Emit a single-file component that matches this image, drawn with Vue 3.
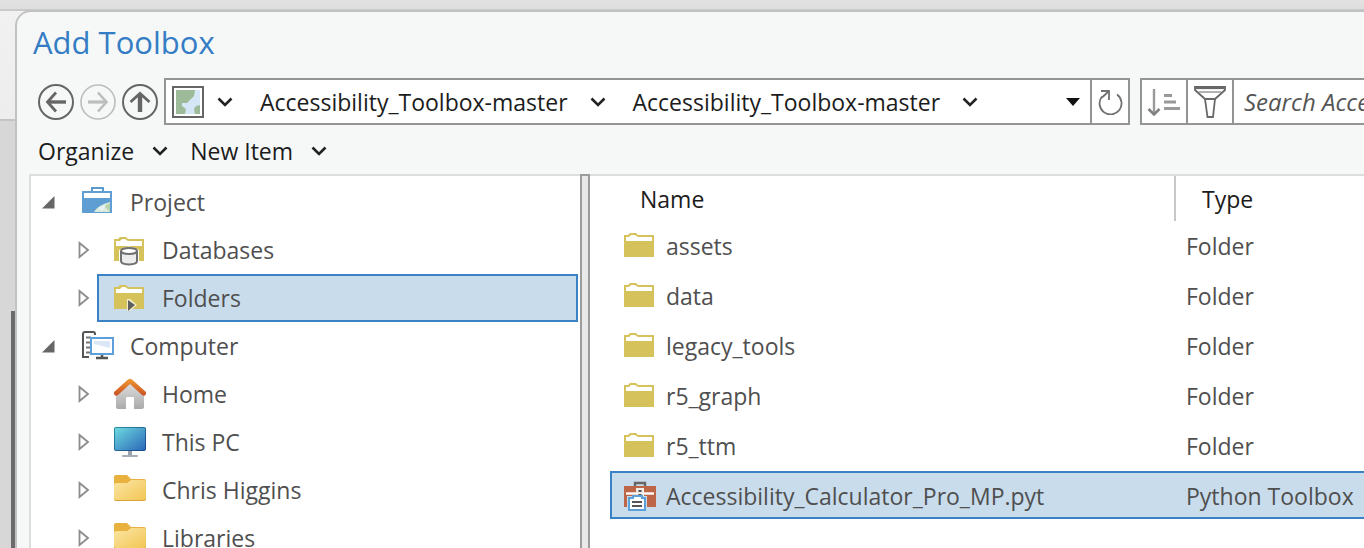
<script setup>
import { ref } from 'vue'

const treeItems = ref([
  { label: 'Project', icon: 'project', level: 1, open: true },
  { label: 'Databases', icon: 'databases', level: 2 },
  { label: 'Folders', icon: 'folders', level: 2, selected: true },
  { label: 'Computer', icon: 'computer', level: 1, open: true },
  { label: 'Home', icon: 'home', level: 2 },
  { label: 'This PC', icon: 'pc', level: 2 },
  { label: 'Chris Higgins', icon: 'winfolder', level: 2 },
  { label: 'Libraries', icon: 'winfolder', level: 2 },
])

const files = ref([
  { name: 'assets', type: 'Folder' },
  { name: 'data', type: 'Folder' },
  { name: 'legacy_tools', type: 'Folder' },
  { name: 'r5_graph', type: 'Folder' },
  { name: 'r5_ttm', type: 'Folder' },
  { name: 'Accessibility_Calculator_Pro_MP.pyt', type: 'Python Toolbox', selected: true },
])

const crumbs = ['Accessibility_Toolbox-master', 'Accessibility_Toolbox-master']
</script>

<template>
  <div class="desktop">
    <section class="dialog" aria-labelledby="dialog-title">
      <h1 id="dialog-title">Add Toolbox</h1>

      <div class="toolbar">
        <nav class="history" aria-label="History">
          <button type="button" aria-label="Back">
            <svg width="36" height="36" viewBox="0 0 36 36" fill="none" stroke="#666">
              <circle cx="18" cy="18" r="17" stroke-width="2" />
              <path d="M28 18H10" stroke-width="3.4" /><path d="M18 8.500L9.500 18L18 27.500" stroke-width="2.800" />
            </svg>
          </button>
          <button type="button" aria-label="Forward" disabled>
            <svg width="36" height="36" viewBox="0 0 36 36" fill="none" stroke="#bdbdbd">
              <circle cx="18" cy="18" r="17" stroke-width="1.600" />
              <path d="M8 18H26" stroke-width="3.2" /><path d="M18 8.500L26.500 18L18 27.500" stroke-width="2.600" />
            </svg>
          </button>
          <button type="button" aria-label="Up one level">
            <svg width="36" height="36" viewBox="0 0 36 36" fill="none" stroke="#666">
              <circle cx="18" cy="18" r="17" stroke-width="2" />
              <path d="M18 28V10" stroke-width="4.4" /><path d="M8.500 18L18 9.500L27.500 18" stroke-width="2.800" />
            </svg>
          </button>
        </nav>

        <div class="address">
          <svg class="place" width="32" height="32" viewBox="0 0 32 32">
            <rect x="1" y="1" width="30" height="30" fill="#fff" stroke="#666" stroke-width="2" />
            <rect x="4" y="4" width="24" height="24" fill="#9dbb98" />
            <path d="M23 4H28V19L24 20L22 23L23 28H13L14 23L10 20L10 17L15 17L19 13L22 10Z" fill="#d5e7f6" />
            <path d="M4 22L7 24L10 25L12 28H4Z" fill="#9dbb98" />
          </svg>
          <button type="button" class="chev" aria-label="Locations">
            <svg width="16" height="10" viewBox="0 0 16 10"><path d="M1.500 1.500L8 8L14.500 1.500" /></svg>
          </button>
          <template v-for="(crumb, i) in crumbs" :key="i">
            <button type="button" class="crumb">{{ crumb }}</button>
            <button type="button" class="chev" :aria-label="'Contents of ' + crumb">
              <svg width="16" height="10" viewBox="0 0 16 10"><path d="M1.500 1.500L8 8L14.500 1.500" /></svg>
            </button>
          </template>
          <button type="button" class="recent" aria-label="Recent places">
            <svg width="14" height="8" viewBox="0 0 14 8"><path d="M0 0H14L7 8Z" fill="#111" /></svg>
          </button>
          <button type="button" class="refresh" aria-label="Refresh">
            <svg width="26" height="26" viewBox="0 0 26 26" fill="none" stroke="#707070" stroke-width="1.800">
              <path d="M5 7.500A11 11 0 1 0 20 5.500" />
              <path d="M4 2H12V11" /><path d="M12 2L5 8.500" />
            </svg>
          </button>
        </div>

        <div class="search">
          <button type="button" class="tool" aria-label="Sort">
            <svg width="34" height="32" viewBox="0 0 34 32" fill="none" stroke="#999">
              <path d="M7 3V29" stroke-width="2.400" /><path d="M1.500 23L7 28.500L12.500 23" stroke-width="2.600" stroke="#808080" />
              <path d="M17 9.500H25M17 16H29M17 22.500H33" stroke-width="3" />
            </svg>
          </button>
          <button type="button" class="tool" aria-label="Filter">
            <svg width="34" height="34" viewBox="0 0 34 34" fill="#fff" stroke="#686868" stroke-width="1.800">
              <path d="M2 2H32V5L22 14H12L2 5Z" />
              <path d="M2 3H32" stroke-width="2.200" /><path d="M6 7H28" stroke="#aaa" />
              <path d="M12 14H22L20 32H14.500Z" />
            </svg>
          </button>
          <input type="text" aria-label="Search" placeholder="Search Accessibility_Toolbox-master" />
        </div>
      </div>

      <div class="menus">
        <button type="button">Organize
          <svg width="16" height="10" viewBox="0 0 16 10"><path d="M1.500 1.500L8 8L14.500 1.500" /></svg>
        </button>
        <button type="button">New Item
          <svg width="16" height="10" viewBox="0 0 16 10"><path d="M1.500 1.500L8 8L14.500 1.500" /></svg>
        </button>
      </div>

      <div class="panes">
        <ul class="tree">
          <li v-for="item in treeItems" :key="item.label" :class="{ child: item.level === 2 }">
            <button type="button" class="toggle" :aria-label="'Expand ' + item.label" :aria-expanded="!!item.open">
              <svg v-if="item.open" width="13" height="13" viewBox="0 0 13 13"><path d="M12.500 0V12.500H0Z" fill="#666" /></svg>
              <svg v-else class="closed" width="12" height="18" viewBox="0 0 12 18"><path d="M1.500 2V16L10 9Z" fill="#fff" stroke="#8c8c8c" stroke-width="1.800" /></svg>
            </button>
            <button type="button" class="entry" :class="{ selected: item.selected }">
              <svg width="32" height="32" viewBox="0 0 32 32">
                <g v-if="item.icon === 'project'">
                  <path d="M10 6V2H21V6" fill="none" stroke="#5b9bd0" stroke-width="2" />
                  <rect x="0" y="5" width="30" height="22" fill="#5f9ed2" />
                  <rect x="2" y="7" width="26" height="5" fill="#fff" />
                  <path d="M12 26Q16 19 28 16V26Z" fill="#dceadb" />
                  <path d="M22 20L28 26V17Z" fill="#b8d4ad" /><path d="M16 22L24 19L20 25Z" fill="#e9f3f8" />
                </g>
                <g v-else-if="item.icon === 'databases'">
                  <path d="M0 5H4L6 3H12L14 5H30V27H0Z" fill="#d5c25a" />
                  <path d="M2 7H6L8 5H11L14 7H28V12H2Z" fill="#fff" />
                  <path d="M5 30V16Q15 9 25 16V30Z" fill="#fff" />
                  <path d="M7 17V27C7 31.500 23 31.500 23 27V17" fill="#ececec" stroke="#707070" stroke-width="2" />
                  <ellipse cx="15" cy="17" rx="8" ry="3" fill="#fff" stroke="#707070" stroke-width="2" />
                </g>
                <g v-else-if="item.icon === 'folders'">
                  <path d="M0 5H4L6 3H12L14 5H30V27H0Z" fill="#d5c25a" />
                  <path d="M2 7H6L8 5H11L14 7H28V11H2Z" fill="#fff" />
                  <path d="M13 17H16L23 23L16 29H13Z" fill="#f4eecd" />
                  <path d="M14 18V29L21 23Z" fill="#606060" />
                </g>
                <g v-else-if="item.icon === 'computer'" fill="none">
                  <path d="M13 5V4Q13 2 11 2H3Q1 2 1 4V27H7" stroke="#555" stroke-width="2" />
                  <path d="M4 7.500H9M4 12.500H8M4 17.500H8M4 22.500H8" stroke="#777" stroke-width="1.800" />
                  <rect x="9" y="8" width="22" height="16" fill="#fff" stroke="#5d9fda" stroke-width="2" />
                  <path d="M12 11H28V18L12 14Z" fill="#dce7f5" />
                  <path d="M20 25V27M14 28H26" stroke="#555" stroke-width="2.600" />
                </g>
                <g v-else-if="item.icon === 'home'">
                  <defs>
                    <linearGradient id="wall" x2="0" y2="1"><stop stop-color="#e2e2e2" /><stop offset="1" stop-color="#aaa" /></linearGradient>
                    <linearGradient id="roof" x2="0" y2="1"><stop stop-color="#f09a35" /><stop offset="1" stop-color="#c84f23" /></linearGradient>
                  </defs>
                  <path d="M2 15L16 3L30 15V29Q30 31 28 31H20V20Q20 19 19 19H13Q12 19 12 20V31H4Q2 31 2 29Z" fill="url(#wall)" />
                  <path d="M0 14L14 1.500Q16 0 18 1.500L32 14V16Q31 19 28 17L16 6L4 17Q1 19 0 16Z" fill="url(#roof)" />
                </g>
                <g v-else-if="item.icon === 'pc'">
                  <defs>
                    <linearGradient id="screen" x2="1" y2="1"><stop stop-color="#6ed9df" /><stop offset="1" stop-color="#2a68b8" /></linearGradient>
                    <linearGradient id="bezel" x2="1" y2="1"><stop stop-color="#288da1" /><stop offset="1" stop-color="#1b448a" /></linearGradient>
                  </defs>
                  <rect x="14" y="25" width="4" height="5" fill="#9ba3ad" />
                  <rect x="8" y="29" width="16" height="2" rx="1" fill="#a5adb8" />
                  <rect x="0" y="1" width="32" height="24" rx="2" fill="url(#bezel)" />
                  <rect x="1" y="2" width="30" height="22" rx="1" fill="url(#screen)" />
                </g>
                <g v-else>
                  <defs>
                    <linearGradient id="manila" x2="1" y2="1"><stop stop-color="#fbe6a5" /><stop offset="1" stop-color="#f2c654" /></linearGradient>
                  </defs>
                  <path d="M0 3Q0 1 2 1H13L17 5H30Q32 5 32 7V12H0Z" fill="#e9b23f" />
                  <path d="M0 11Q0 9 2 9H13L17 6H30Q32 6 32 8V25Q32 27 30 27H2Q0 27 0 25Z" fill="#d9a435" />
                  <path d="M0 11Q0 9 2 9H13L17 6H30Q32 6 32 8V24Q32 26 30 26H2Q0 26 0 24Z" fill="url(#manila)" />
                </g>
              </svg>
              <span>{{ item.label }}</span>
            </button>
          </li>
        </ul>

        <div class="splitter" role="separator" aria-orientation="vertical"></div>

        <div class="listing">
          <table>
            <colgroup><col class="name-col" /><col /></colgroup>
            <thead>
              <tr><th scope="col">Name</th><th scope="col">Type</th></tr>
            </thead>
            <tbody>
              <tr v-for="file in files" :key="file.name" :class="{ selected: file.selected }">
                <td>
                  <div class="cell">
                    <svg width="32" height="32" viewBox="0 0 32 32">
                      <g v-if="file.type === 'Folder'">
                        <path d="M0 5H4L6 3H12L14 5H30V27H0Z" fill="#d5c25a" />
                        <path d="M2 7H5L7 5H11L14 7H28V11H2Z" fill="#fff" />
                      </g>
                      <g v-else>
                        <path d="M11 7V3H21V7" fill="none" stroke="#666" stroke-width="2.400" />
                        <rect x="0" y="6" width="32" height="21" fill="#bd6748" />
                        <path d="M2 13.500H30" stroke="#fff" stroke-width="2.400" />
                        <rect x="12" y="8" width="8" height="9" fill="#f2eeea" />
                        <path d="M16 10V12M16 14V17" stroke="#555" stroke-width="3.200" />
                        <rect x="3" y="16" width="20" height="15" fill="#c9dcec" />
                        <path d="M5 18H9V16H18V18H21V30H5Z" fill="#fff" stroke="#5ba0d9" stroke-width="2" />
                        <path d="M8 22H18M8 26H18" stroke="#555" stroke-width="2" />
                      </g>
                    </svg>
                    <span>{{ file.name }}</span>
                  </div>
                </td>
                <td><div class="cell">{{ file.type }}</div></td>
              </tr>
            </tbody>
          </table>
        </div>
      </div>
    </section>
  </div>
</template>

<style>
body {
  margin: 0;
}
</style>

<style scoped>
* {
  box-sizing: border-box;
}

.desktop {
  display: flex;
  height: 100vh;
  overflow: hidden;
  padding: 10px 0 0 15px;
  font-family: "Open Sans", "Noto Sans", sans-serif;
  font-size: 23px;
  line-height: 32px;
  color: #4f4f4f;
  background:
    linear-gradient(#6b6b6b, #6b6b6b) 11px 311px / 4px 100% no-repeat,
    linear-gradient(#e2e2e2, #dedede) 0 0 / 100% 9px no-repeat,
    linear-gradient(#c9c9c9, #c9c9c9) 0 9px / 100% 2px no-repeat,
    linear-gradient(#f1f1f1, #ededed) 0 11px / 100% 108px no-repeat,
    linear-gradient(#c4c4c4, #c4c4c4) 0 119px / 100% 2px no-repeat,
    #d7d7d7;
}

.dialog {
  flex: 1;
  min-width: 0;
  display: flex;
  flex-direction: column;
  border-top: 2px solid #c2c2c4;
  border-left: 2px solid #c2c2c4;
  border-top-left-radius: 16px;
  background: #f6f8f8;
}

button {
  display: flex;
  align-items: center;
  padding: 0;
  border: 0;
  background: none;
  font: inherit;
  color: inherit;
  text-align: left;
  white-space: nowrap;
}

svg {
  display: block;
  flex: none;
}

h1 {
  margin: 0;
  padding: 8px 0 14px 16px;
  font-size: 31px;
  line-height: 44px;
  font-weight: 400;
  color: #347dc4;
}

.toolbar {
  display: flex;
  height: 47px;
  color: #1c1c1c;
}

.history {
  display: flex;
  align-items: center;
  gap: 6px;
  padding: 0 6px 0 21px;
}

.address {
  flex: 1;
  min-width: 0;
  display: flex;
  align-items: center;
  border: 2px solid #949494;
  background: #fff;
  padding-left: 6px;
}

.chev {
  width: 16px;
}

.chev path,
.menus path {
  fill: none;
  stroke: #222;
  stroke-width: 2.6px;
}

.place + .chev {
  margin: 0 27px 0 13px;
}

.crumb + .chev {
  margin: 0 27px 0 22px;
}

.recent {
  margin-left: auto;
  padding: 0 10px;
  height: 100%;
}

.refresh {
  align-self: stretch;
  width: 38px;
  justify-content: center;
  border-left: 2px solid #949494;
}

.search {
  display: flex;
  width: 224px;
  margin-left: 10px;
  border: 2px solid #949494;
  border-right: 0;
  background: #fff;
}

.tool {
  flex: none;
  width: 46px;
  justify-content: center;
  border-right: 2px solid #949494;
}

.search input {
  flex: 1;
  min-width: 0;
  border: 0;
  padding: 0 0 0 10px;
  background: none;
  font: italic 24px/32px "Open Sans", "Noto Sans", sans-serif;
}

.search input::placeholder {
  color: #555;
  opacity: 1;
}

.menus {
  display: flex;
  gap: 22px;
  padding: 10px 0 7px 21px;
  color: #1c1c1c;
}

.menus button {
  gap: 18px;
}

.panes {
  flex: 1;
  min-height: 0;
  display: flex;
  padding-left: 12px;
}

.tree {
  flex: none;
  width: 551px;
  margin: 0;
  padding: 2px 2px 0 0;
  overflow: hidden;
  list-style: none;
  border-top: 2px solid #dcdede;
  border-left: 2px solid #dcdede;
  background: #fff;
}

.tree li {
  display: flex;
  height: 48px;
  padding-left: 11px;
}

.tree li.child {
  padding-left: 43px;
}

.toggle {
  flex: none;
  width: 23px;
}

.toggle .closed {
  margin-left: 4px;
}

.entry {
  flex: 1;
  gap: 16px;
  padding-left: 15px;
  border: 2px solid transparent;
}

.selected.entry {
  border-color: #3b82c4;
  background: #c9dcec;
}

.splitter {
  flex: none;
  width: 10px;
  border: 2px solid #9c9c9c;
  border-bottom: 0;
  background: #e9e9e9;
}

.listing {
  flex: 1;
  min-width: 0;
  padding-left: 20px;
  border-top: 2px solid #dcdede;
  background: #fff;
}

table {
  width: 100%;
  table-layout: fixed;
  border-collapse: separate;
  border-spacing: 0;
}

.name-col {
  width: 564px;
}

th {
  height: 45px;
  padding: 0 0 0 30px;
  font-weight: 400;
  text-align: left;
  color: #1c1c1c;
}

th + th {
  padding-left: 26px;
  border-left: 2px solid #c6c8ca;
}

td {
  padding: 0 0 2px;
}

.cell {
  display: flex;
  align-items: center;
  gap: 10px;
  height: 48px;
  padding: 2px 0 0 12px;
  border: 2px solid transparent;
  border-width: 2px 0;
  white-space: nowrap;
}

td:first-child .cell {
  border-left-width: 2px;
}

.selected .cell {
  border-color: #3b82c4;
  background: #c9dcec;
}
</style>
